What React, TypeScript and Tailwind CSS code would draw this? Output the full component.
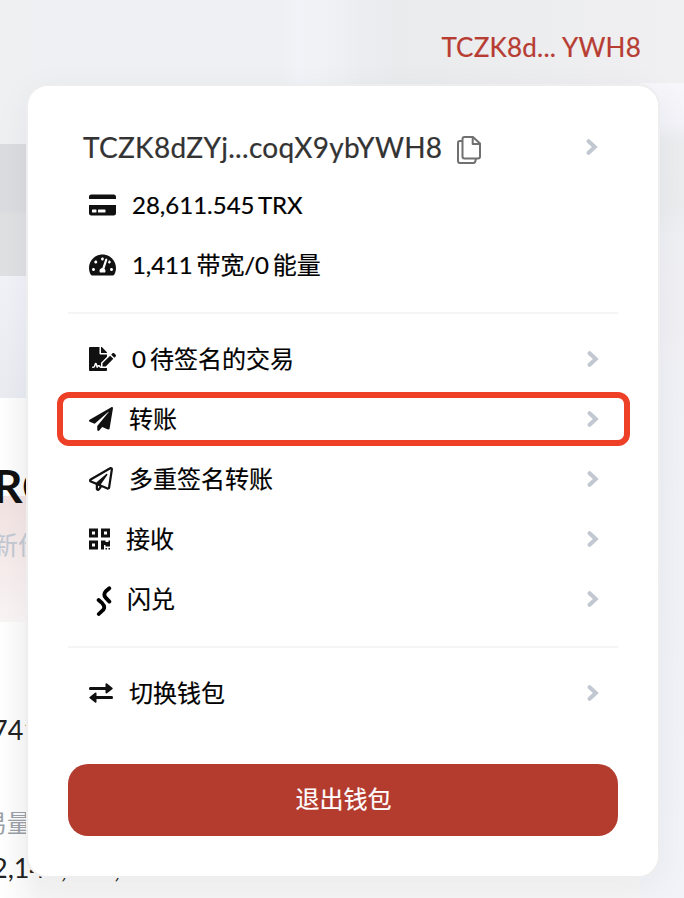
import type { ReactNode } from 'react';
import { FaCreditCard, FaFileSignature, FaPaperPlane, FaQrcode, FaRegPaperPlane, FaTachometerAlt } from 'react-icons/fa';

function Chevron() {
  return (
    <svg className="h-[18px] w-3 shrink-0" viewBox="0 0 12 18" fill="none">
      <path d="M2.6 3.2 8.8 9 2.6 14.8" stroke="#c2c8d1" strokeWidth="4" strokeLinecap="round" strokeLinejoin="miter" />
    </svg>
  );
}

function CopyIcon() {
  return (
    <svg className="h-7 w-6" viewBox="0 0 24 28" fill="none" stroke="#707070" strokeWidth="2" strokeLinejoin="round">
      <path d="M5 5H2.8Q1 5 1 7V25Q1 27 3 27H16.5Q18.6 27 18.8 23" />
      <path d="M7.5 1H16L23 7.5V20.5Q23 22.5 21 22.5H7.5Q5.5 22.5 5.5 20.5V3Q5.5 1 7.5 1Z" />
      <path d="M15.7 1.3V8H22.8" />
    </svg>
  );
}

function SwapIcon() {
  return (
    <svg className="h-[30px] w-4" viewBox="0 0 16 30" fill="none" stroke="#000" strokeWidth="3.8" strokeLinecap="round" strokeLinejoin="round">
      <path d="M13.3 2.2 9.8 5.2Q7 8.2 9.6 11.6L13.4 15.6" />
      <path d="M2.6 14 6.2 17.2Q9.5 20.6 7.4 23.6L2.8 28" />
    </svg>
  );
}

function ExchangeIcon() {
  return (
    <svg className="h-5 w-6" viewBox="0 0 24 20" fill="#111">
      <path d="M1 4H16.5V1Q16.7-.3 18 .6L23.3 4.8Q24.2 5.5 23.3 6.2L18 10.3Q16.7 11 16.5 9.8V7H1Q0 7 0 5.5T1 4Z" />
      <path d="M23 13H7.5V10.2Q7.3 9 6 9.8L.7 13.9Q-.2 14.6.7 15.3L6 19.5Q7.3 20.3 7.5 19V16H23Q24 16 24 14.5T23 13Z" />
    </svg>
  );
}

type RowProps = { icon: ReactNode; label: string; pad: string; arrow?: boolean; highlighted?: boolean };

function Row({ icon, label, pad, arrow = true, highlighted = false }: RowProps) {
  return (
    <div className="relative flex h-[60px] items-center justify-between pr-[19px] pl-[21px]">
      {highlighted && <div className="absolute -right-[11.5px] -left-[11.5px] top-[3px] h-[54px] rounded-[12px] border-[6px] border-[#ed4027]" />}
      <div className="flex items-center">
        <span className="flex h-[30px] items-center">{icon}</span>
        <span className={`${pad} text-2xl leading-[30px] text-black [-webkit-text-stroke:0.2px] [word-spacing:-2px]`}>{label}</span>
      </div>
      {arrow && <Chevron />}
    </div>
  );
}

function PageBehind() {
  return (
    <div className="flex h-full flex-col">
      <header className="flex h-[83px] shrink-0 justify-end pt-8 pr-[43px]">
        <span className="text-[26px] leading-[30px] tracking-[0.22px] text-[#b73c31] [-webkit-text-stroke:0.2px]">TCZK8d... YWH8</span>
      </header>
      <div className="flex min-h-0 flex-1">
        <div className="flex min-w-0 flex-1 flex-col pt-[61px]">
          <div className="h-[132px] w-[120px] shrink-0 bg-linear-to-b from-[#dbdcdf] from-50% to-[#dfe0e2] to-54%" />
          <div className="h-[122px] shrink-0 bg-linear-to-b from-[#f1f2f8] to-[#e9ebf1]" />
          <main className="flex-1 bg-linear-to-r from-white to-[#f5f5f5] to-[6%] whitespace-nowrap">
            <div className="h-[98px] pt-[60px]">
              <div className="-ml-[7px] text-[46px] leading-[56px] font-bold text-[#111]">RC</div>
            </div>
            <div className="h-[126px] bg-linear-to-b from-[#f1e2e1] to-[#f9f4f4] pt-[34px]">
              <div className="-ml-2 text-[26px] leading-[30px] text-[#c2c8d1]">新价格</div>
            </div>
            <div className="-ml-2 pt-[93px] text-[27px] leading-[30px] text-[#222]">741</div>
            <div className="-ml-[17px] pt-[63px] text-2xl leading-[30px] text-[#999fa7]">易量</div>
            <div className="-ml-2 pt-[15px] text-[27px] leading-[30px] text-[#222]">2,140,786,530</div>
          </main>
        </div>
        <aside className="w-11 bg-[linear-gradient(180deg,#f6f6fb_0%,#f3f3f9_5%,#ecedef_7%,#ebecee_15%,#eff0f4_19%,#f0eff4_30%,#f0f1f6_36%,#f1f3f8_100%)]" />
      </div>
    </div>
  );
}

export default function App() {
  return (
    <div className="relative h-[898px] w-[684px] overflow-hidden bg-[linear-gradient(90deg,#eff0f2_0%,#eff0f3_41%,#f2f3f8_43.5%,#f1f2f6_47%,#ecedf0_53%,#eaebed_58%,#f0f0f3_100%)] font-['Lato','Noto_Sans_CJK_SC',sans-serif]">
      <PageBehind />
      <section className="absolute top-[84px] left-[26px] h-[794px] w-[634px] rounded-[22px] border-2 border-[#eeeeef] bg-white px-10 shadow-[0_8px_36px_rgba(30,30,50,0.05)]">
        <div className="flex h-[89px] items-center justify-between pt-[33px] pr-5 pl-[15px]">
          <div className="flex items-center">
            <span className="text-[28px] leading-9 tracking-[0.3px] text-[#333] [-webkit-text-stroke:0.2px]">TCZK8dZYj...coqX9ybYWH8</span>
            <span className="ml-[15px] pt-[5px]"><CopyIcon /></span>
          </div>
          <Chevron />
        </div>
        <Row icon={<FaCreditCard className="h-7 w-[27px] text-[#111]" />} label="28,611.545 TRX" pad="pl-4" arrow={false} />
        <Row icon={<FaTachometerAlt className="h-7 w-[27px] text-[#111]" />} label="1,411 带宽/0 能量" pad="pl-4 tracking-[-0.12px]" arrow={false} />
        <div className="mt-[17px] mb-[15px] h-[2px] bg-[#f5f5f3]" />
        <Row icon={<FaFileSignature className="h-6 w-[27px] text-[#111]" />} label="0 待签名的交易" pad="pl-4" />
        <Row icon={<FaPaperPlane className="h-6 w-6 text-[#111]" />} label="转账" pad="pl-4" highlighted />
        <Row icon={<FaRegPaperPlane className="h-6 w-6 text-[#111]" />} label="多重签名转账" pad="pl-4" />
        <Row icon={<FaQrcode className="h-6 w-[21px] text-[#111]" />} label="接收" pad="pl-4" />
        <Row icon={<span className="ml-[7px] pt-1"><SwapIcon /></span>} label="闪兑" pad="pl-[15px]" />
        <div className="mt-[17px] mb-[15px] h-[2px] bg-[#f5f5f3]" />
        <Row icon={<ExchangeIcon />} label="切换钱包" pad="pl-4" />
        <button className="mt-[41px] h-[72px] w-full rounded-[20px] bg-[#b43c2f] pb-[2px] pl-px text-2xl text-white [-webkit-text-stroke:0.2px]">退出钱包</button>
      </section>
    </div>
  );
}
